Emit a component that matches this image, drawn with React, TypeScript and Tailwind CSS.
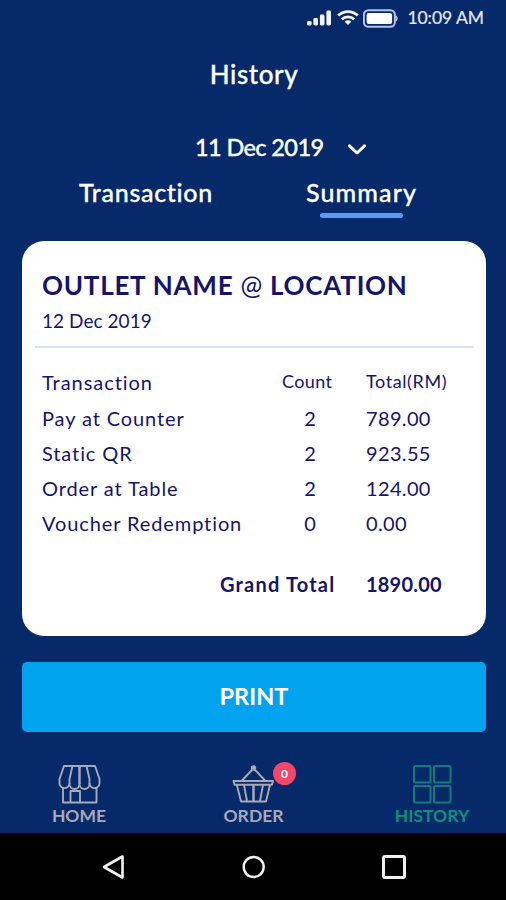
type Row = { label: string; count: string; total: string };

const rows: Row[] = [
  { label: "Pay at Counter", count: "2", total: "789.00" },
  { label: "Static QR", count: "2", total: "923.55" },
  { label: "Order at Table", count: "2", total: "124.00" },
  { label: "Voucher Redemption", count: "0", total: "0.00" },
];

const StatusBar = () => (
  <div className="flex h-9 items-center justify-end pr-[22px]">
    <svg width="24" height="16" viewBox="0 0 24 16" fill="#f4f4fb">
      <rect x="0" y="11" width="4.6" height="4.5" rx="1.4" />
      <rect x="6.4" y="8" width="4.6" height="7.5" rx="1.4" />
      <rect x="12.9" y="4.5" width="4.6" height="11" rx="1.4" />
      <rect x="19.4" y="0.5" width="4.6" height="15" rx="1.4" />
    </svg>
    <svg className="ml-[6px]" width="22" height="16" viewBox="0 0 22 16" fill="none" stroke="#f4f4fb" strokeWidth="2.8">
      <path d="M1.200 5.600C6.800.3 15.200.3 20.800 5.600" />
      <path d="M4.800 9.300c3.600-3.200 8.800-3.200 12.400 0" />
      <path d="M7.600 11.400c2-1.700 4.800-1.700 6.800 0L11 15z" fill="#f4f4fb" stroke="none" />
    </svg>
    <svg className="ml-[4px]" width="36" height="19" viewBox="0 0 36 19">
      <rect x="0.900" y="1.200" width="31" height="16.600" rx="4.500" fill="none" stroke="#b9c0e8" strokeWidth="2" />
      <rect x="3.600" y="4" width="25.500" height="11" rx="2" fill="#fff" />
      <path d="M33 6.500c2.200 1 2.200 5 0 6z" fill="#b9c0e8" />
    </svg>
    <span className="ml-[8px] text-[17.5px] leading-5 tracking-[-0.05px] text-[#e6e9f5] [-webkit-text-stroke:0.2px_#e6e9f5]">10:09 AM</span>
  </div>
);

const Header = () => (
  <header className="font-medium text-white [-webkit-text-stroke:0.3px_#fff]">
    <h1 className="mt-[22px] pl-[2px] text-center text-[26px] leading-8 tracking-[0.6px]">History</h1>
    <div className="mt-[41px] flex h-8 items-center pl-[195px]">
      <span className="w-[152px] text-[23.5px] leading-8 tracking-[-0.6px] whitespace-nowrap">11 Dec 2019</span>
      <svg className="mt-1" width="20" height="13" viewBox="0 0 20 13" fill="none" stroke="#fff" strokeWidth="3" strokeLinecap="round" strokeLinejoin="round">
        <path d="M2.500 2.800 10 10l7.500-7.200" />
      </svg>
    </div>
    <div className="mt-[13px] flex">
      <div className="w-[227px] pl-[79px] text-[25px] leading-8 tracking-[0.7px]">Transaction</div>
      <div className="w-[190px] pl-[79px]">
        <div className="text-[25px] leading-8 tracking-[1.1px]">Summary</div>
        <div className="mt-[5px] ml-[14px] h-[5px] w-[83px] rounded-full bg-[#5c9bf5]" />
      </div>
    </div>
  </header>
);

const SummaryCard = () => (
  <section className="mt-[23px] ml-[22px] h-[395px] w-[464px] rounded-[22px] bg-white pt-[28px] text-[#15146a]">
    <h2 className="pl-[20px] text-[26px] leading-8 font-bold tracking-[0.75px] whitespace-nowrap">
      OUTLET NAME <span className="font-normal">@</span> LOCATION
    </h2>
    <p className="mt-[8px] pl-[20px] text-[19px] leading-6 tracking-[0.05px]">12 Dec 2019</p>
    <hr className="mr-[12px] ml-[13px] mt-[13px] border-t-2 border-[#d6e2fb]" />
    <div className="mt-[16px] flex h-[35px] items-center pl-[20px]">
      <span className="w-[240px] text-[20px] tracking-[0.95px]">Transaction</span>
      <span className="w-[84px] text-[18px] tracking-[0.4px]">Count</span>
      <span className="text-[18px] tracking-[0.6px]">Total(RM)</span>
    </div>
    <div className="mt-px">
      {rows.map((row) => (
        <div key={row.label} className="flex h-[35.2px] items-center pl-[20px] text-[20px]">
          <span className="w-[240px] tracking-[0.9px] whitespace-nowrap">{row.label}</span>
          <span className="w-[56px] text-center">{row.count}</span>
          <span className="pl-[28px] tracking-[0.35px]">{row.total}</span>
        </div>
      ))}
    </div>
    <div className="mt-[26px] flex h-[35px] items-center text-[20px] font-bold">
      <span className="w-[344px] pl-[198px] tracking-[1.2px] whitespace-nowrap">Grand Total</span>
      <span className="tracking-[0.2px]">1890.00</span>
    </div>
  </section>
);

const StoreIcon = () => (
  <svg width="44" height="40" viewBox="0 0 44 40" fill="none" stroke="#a7a8b8" strokeWidth="1.9" strokeLinejoin="round">
    <path d="M7 2h31l4.500 13v3a5 5 0 0 1-10 2 5 5 0 0 1-10 0 5 5 0 0 1-10 0 5 5 0 0 1-10-2v-3z" />
    <path d="M15.500 2 12.500 15v5M29.500 2l3 13v5" />
    <path d="M22.500 2v18" strokeWidth="2.500" />
    <path d="M6 23.500V38.500h33.500V23.500" />
    <path d="M13.500 38.500V27H23v11.500" />
  </svg>
);

const BasketIcon = () => (
  <svg width="44" height="40" viewBox="0 0 44 40" fill="none" stroke="#a7a8b8" strokeWidth="1.9" strokeLinejoin="round">
    <circle cx="21.500" cy="4" r="1.800" fill="#a7a8b8" />
    <path d="M20.500 5.500 9.500 17M22.500 5.500 33.500 17" />
    <path d="M1.500 17H41l-1 3.800H2.500z" />
    <path d="M4.800 20.800 9 37.500h25l4-16.700" />
    <path d="M12 21l3 16M31 21l-3 16" />
    <path d="M21.500 21v16" strokeWidth="2.500" />
  </svg>
);

const GridIcon = () => (
  <svg width="40" height="40" viewBox="0 0 40 40" fill="none" stroke="#0f7d7c" strokeWidth="2">
    <rect x="2" y="2" width="16.500" height="16.500" rx="1" />
    <rect x="22" y="2" width="16.500" height="16.500" rx="1" />
    <rect x="2" y="22" width="16.500" height="16.500" rx="1" />
    <rect x="22" y="22" width="16.500" height="16.500" rx="1" />
  </svg>
);

const BottomNav = () => (
  <nav className="flex h-[69px] text-[17.5px] leading-6 font-bold text-[#a7a8b8]">
    <div className="flex w-[158px] shrink-0 flex-col items-center">
      <StoreIcon />
      <span>HOME</span>
    </div>
    <div className="relative flex w-[191px] shrink-0 flex-col items-center">
      <BasketIcon />
      <span>ORDER</span>
      <span className="absolute top-[-2px] left-[115px] flex size-[23px] items-center justify-center rounded-full bg-[#f4456b] text-[12px] text-white">0</span>
    </div>
    <div className="flex w-[157px] shrink-0 flex-col items-center pl-[9px] text-[#12817f]">
      <GridIcon />
      <span className="text-[#0c907f]">HISTORY</span>
    </div>
  </nav>
);

const SystemBar = () => (
  <div className="flex h-[67px] items-center justify-between bg-black pr-[99px] pl-[102px]">
    <svg width="24" height="26" viewBox="0 0 24 26" fill="none" stroke="#f2f2f2" strokeWidth="2.600" strokeLinejoin="round">
      <path d="M20.500 2.500v21L2 13z" />
    </svg>
    <svg width="24" height="24" viewBox="0 0 24 24" fill="none" stroke="#f2f2f2" strokeWidth="2.400">
      <circle cx="11.700" cy="12" r="10" />
    </svg>
    <svg width="26" height="26" viewBox="0 0 26 26" fill="none" stroke="#f2f2f2" strokeWidth="3">
      <rect x="2.500" y="2.500" width="21" height="21" rx="1.500" />
    </svg>
  </div>
);

export default function App() {
  return (
    <div className="h-[900px] w-[506px] overflow-hidden bg-[#062a69] font-['Lato',sans-serif]">
      <StatusBar />
      <Header />
      <SummaryCard />
      <button className="mt-[26px] mb-8 ml-[22px] block h-[70px] w-[464px] rounded-[5px] bg-[#02a3ee] text-[23.5px] font-bold text-white">
        PRINT
      </button>
      <BottomNav />
      <SystemBar />
    </div>
  );
}
